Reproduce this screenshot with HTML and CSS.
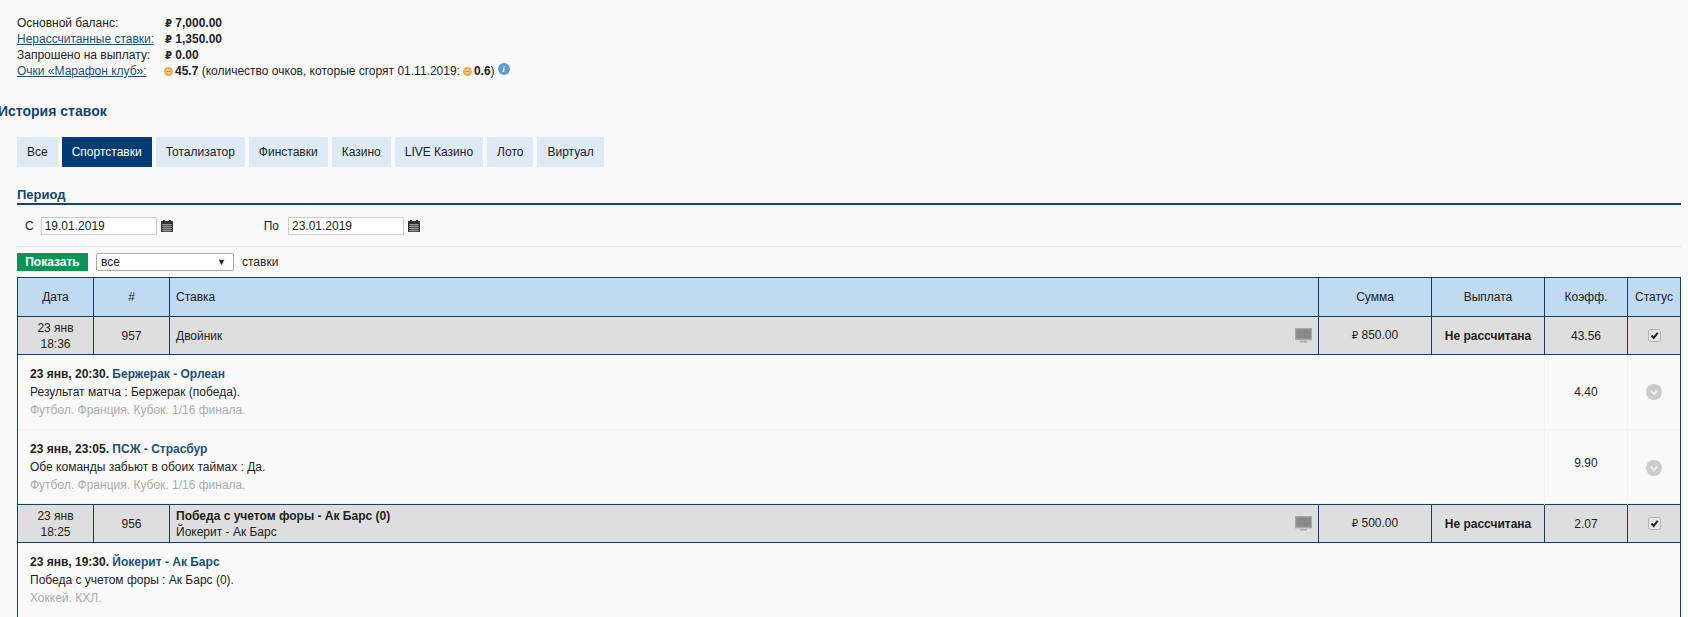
FILE: index.html
```html
<!DOCTYPE html>
<html lang="ru">
<head>
    <meta charset="UTF-8">
    <title>История ставок</title>
    <link rel="stylesheet" href="styles.css">
</head>
<body>
    <svg class="sprites" width="0" height="0">
        <symbol id="monitor" viewBox="0 0 17 15">
            <rect x="0" y="0" width="17" height="12" fill="#999"/>
            <rect x="1.5" y="1.5" width="14" height="9" fill="#8a8a8a"/>
            <rect x="0" y="0" width="17" height="12" fill="none" stroke="#b5b5b5"/>
            <rect x="5" y="13" width="7" height="1.5" fill="#aaa"/>
        </symbol>
        <symbol id="cal" viewBox="0 0 12 12">
            <rect x="0" y="1" width="12" height="11" fill="#333"/>
            <rect x="2" y="0" width="2" height="2" fill="#333"/>
            <rect x="8" y="0" width="2" height="2" fill="#333"/>
            <path d="M1 4.5h10M1 6.5h10M1 8.5h10M1 10.5h10M3 4v8M5 4v8M7 4v8M9 4v8" stroke="#bbb" stroke-width=".6"/>
        </symbol>
        <symbol id="tick" viewBox="0 0 13 13">
            <rect x=".5" y=".5" width="12" height="12" rx="2" fill="#e6e6e6" stroke="#b4b4b4"/>
            <path d="M3.5 6.5l2.2 2.4 4-5" fill="none" stroke="#222" stroke-width="2"/>
        </symbol>
        <symbol id="pending" viewBox="0 0 16 16">
            <circle cx="8" cy="8" r="8" fill="#ccc"/>
            <path d="M4.8 6.8L8 10l3.2-3.2" fill="none" stroke="#eee" stroke-width="2"/>
        </symbol>
        <symbol id="coin" viewBox="0 0 9 9">
            <circle cx="4.5" cy="4.5" r="4.5" fill="#eaa94f"/>
            <circle cx="4.5" cy="4.5" r="2.4" fill="#f6d9a6"/>
            <rect x="2.5" y="4" width="4" height="1" fill="#d08a2c"/>
        </symbol>
    </svg>

    <div class="balance">
        <div class="balance-row">
            <span class="balance-label">Основной баланс:</span>
            <b><span class="rub">₽</span> 7,000.00</b>
        </div>
        <div class="balance-row">
            <a class="balance-label" href="#">Нерассчитанные ставки:</a>
            <b><span class="rub">₽</span> 1,350.00</b>
        </div>
        <div class="balance-row">
            <span class="balance-label">Запрошено на выплату:</span>
            <b><span class="rub">₽</span> 0.00</b>
        </div>
        <div class="balance-row">
            <a class="balance-label" href="#">Очки «Марафон клуб»:</a>
            <span class="points">
                <svg class="coin"><use href="#coin"/></svg><b>45.7</b>&nbsp;(количество очков, которые сгорят 01.11.2019:<svg class="coin coin-gap"><use href="#coin"/></svg><b>0.6</b>)
                <span class="info">i</span>
            </span>
        </div>
    </div>

    <h1 class="page-title">История ставок</h1>

    <div class="tabs">
        <a class="tab" href="#">Все</a>
        <a class="tab active" href="#">Спортставки</a>
        <a class="tab" href="#">Тотализатор</a>
        <a class="tab" href="#">Финставки</a>
        <a class="tab" href="#">Казино</a>
        <a class="tab" href="#">LIVE Казино</a>
        <a class="tab" href="#">Лото</a>
        <a class="tab" href="#">Виртуал</a>
    </div>

    <h2 class="period-title">Период</h2>

    <div class="dates">
        <div class="date-group">
            <label for="dateFrom">С</label>
            <input class="date-input" id="dateFrom" type="text" value="19.01.2019">
            <svg class="cal"><use href="#cal"/></svg>
        </div>
        <div class="date-group date-group-to">
            <label for="dateTo">По</label>
            <input class="date-input" id="dateTo" type="text" value="23.01.2019">
            <svg class="cal"><use href="#cal"/></svg>
        </div>
    </div>

    <div class="filter">
        <button class="show-btn" type="button">Показать</button>
        <div class="select"><span>все</span><span class="select-arrow">▼</span></div>
        <span>ставки</span>
    </div>

    <table class="bets">
        <colgroup>
            <col class="col-date">
            <col class="col-num">
            <col>
            <col class="col-money">
            <col class="col-money">
            <col class="col-coef">
            <col class="col-status">
        </colgroup>
        <thead>
            <tr>
                <th>Дата</th>
                <th>#</th>
                <th class="left">Ставка</th>
                <th>Сумма</th>
                <th>Выплата</th>
                <th>Коэфф.</th>
                <th>Статус</th>
            </tr>
        </thead>
        <tbody>
            <tr class="bet">
                <td>23 янв<br>18:36</td>
                <td>957</td>
                <td class="left">
                    <div class="bet-name">
                        <span>Двойник</span>
                        <svg class="monitor"><use href="#monitor"/></svg>
                    </div>
                </td>
                <td><span class="rub-small">₽</span> 850.00</td>
                <td><b>Не рассчитана</b></td>
                <td>43.56</td>
                <td><svg class="tick"><use href="#tick"/></svg></td>
            </tr>
            <tr class="leg">
                <td colspan="5">
                    <div class="leg-head"><b>23 янв, 20:30.</b> <a href="#">Бержерак - Орлеан</a></div>
                    <div>Результат матча : Бержерак (победа).</div>
                    <div class="leg-league">Футбол. Франция. Кубок. 1/16 финала.</div>
                </td>
                <td class="leg-coef">4.40</td>
                <td class="leg-status"><svg class="pending"><use href="#pending"/></svg></td>
            </tr>
            <tr class="leg leg-shifted">
                <td colspan="5">
                    <div class="leg-head"><b>23 янв, 23:05.</b> <a href="#">ПСЖ - Страсбур</a></div>
                    <div>Обе команды забьют в обоих таймах : Да.</div>
                    <div class="leg-league">Футбол. Франция. Кубок. 1/16 финала.</div>
                </td>
                <td class="leg-coef">9.90</td>
                <td class="leg-status"><svg class="pending"><use href="#pending"/></svg></td>
            </tr>
            <tr class="bet">
                <td>23 янв<br>18:25</td>
                <td>956</td>
                <td class="left">
                    <div class="bet-name">
                        <span><b>Победа с учетом форы - Ак Барс (0)</b><br>Йокерит - Ак Барс</span>
                        <svg class="monitor"><use href="#monitor"/></svg>
                    </div>
                </td>
                <td><span class="rub-small">₽</span> 500.00</td>
                <td><b>Не рассчитана</b></td>
                <td>2.07</td>
                <td><svg class="tick"><use href="#tick"/></svg></td>
            </tr>
            <tr class="leg leg-last">
                <td colspan="5">
                    <div class="leg-head"><b>23 янв, 19:30.</b> <a href="#">Йокерит - Ак Барс</a></div>
                    <div>Победа с учетом форы : Ак Барс (0).</div>
                    <div class="leg-league">Хоккей. КХЛ.</div>
                </td>
                <td class="leg-coef"></td>
                <td class="leg-status"></td>
            </tr>
        </tbody>
    </table>
</body>
</html>
```

FILE: styles.css
```css
html {
    height: 617px;
    overflow: hidden;
}

body {
    margin: 0;
    padding: 15px 7px 0 17px;
    height: 602px;
    overflow: hidden;
    background: #fafafa;
    color: #222;
    font-family: "Liberation Sans", Arial, sans-serif;
    font-size: 12px;
}

.sprites {
    position: absolute;
}

a {
    color: #1c4f78;
}

/* balance block */
.balance-row {
    display: flex;
    height: 16px;
    line-height: 16px;
}

.balance-label {
    width: 148px;
    flex-shrink: 0;
}

.rub {
    font-family: "DejaVu Sans", sans-serif;
    font-size: 10px;
}

.rub-small {
    font-family: "DejaVu Sans", sans-serif;
    font-size: 10px;
}

.points {
    display: flex;
    align-items: center;
}

.coin {
    width: 9px;
    height: 9px;
    margin: 0 2px 0 -1px;
}

.coin-gap {
    margin-left: 3px;
}

.info {
    display: inline-block;
    width: 12px;
    height: 12px;
    margin: -5px 0 0 3px;
    border-radius: 50%;
    background: #5b9bd5;
    color: #fff;
    font: italic bold 9px/12px "Liberation Serif", serif;
    text-align: center;
}

.page-title {
    margin: 23px 0 0 -19px;
    height: 18px;
    color: #13466e;
    font-size: 14px;
    line-height: 18px;
}

/* tabs */
.tabs {
    display: flex;
    gap: 4px;
    margin-top: 17px;
}

.tab {
    height: 30px;
    padding: 0 10px;
    background: #deebf6;
    color: #222;
    line-height: 30px;
    text-decoration: none;
}

.tab.active {
    background: #003b73;
    color: #fff;
}

.period-title {
    margin: 20px 0 0;
    height: 16px;
    border-bottom: 2px solid #13466e;
    color: #13466e;
    font-size: 13px;
    line-height: 16px;
}

/* dates */
.dates {
    display: flex;
    height: 41px;
    align-items: center;
    border-bottom: 1px solid #e4e4e4;
}

.date-group {
    display: flex;
    align-items: center;
    padding-left: 8px;
}

.date-group-to {
    padding-left: 91px;
}

.date-group label {
    margin-right: 7px;
}

.date-group-to label {
    margin-right: 9px;
}

.date-input {
    box-sizing: border-box;
    width: 116px;
    height: 18px;
    padding: 0 3px;
    border: 1px solid #ccc;
    background: #fff;
    color: #222;
    font-family: inherit;
    font-size: 12px;
}

.cal {
    width: 12px;
    height: 12px;
    margin-left: 4px;
}

.filter {
    display: flex;
    align-items: center;
    gap: 8px;
    margin-top: 6px;
    height: 18px;
}

.show-btn {
    width: 71px;
    height: 18px;
    padding: 0;
    border: none;
    background: #0c9457;
    color: #fff;
    font-family: inherit;
    font-size: 12px;
    font-weight: bold;
}

.select {
    box-sizing: border-box;
    display: flex;
    justify-content: space-between;
    align-items: center;
    width: 138px;
    height: 18px;
    padding: 0 7px 0 4px;
    border: 1px solid #aaa;
    border-radius: 2px;
    background: #fff;
}

.select-arrow {
    font-size: 9px;
}

/* bets table */
.bets {
    width: 1664px;
    margin-top: 6px;
    border-collapse: collapse;
    table-layout: fixed;
}

.col-date,
.col-num {
    width: 76px;
}

.col-money {
    width: 113px;
}

.col-coef {
    width: 83px;
}

.col-status {
    width: 53px;
}

.bets th,
.bets .bet td {
    border: 1px solid #1a3d66;
    padding: 0;
    text-align: center;
}

.bets th {
    height: 38px;
    background: #c0daf2;
    font-weight: normal;
}

.bets .bet td {
    height: 37px;
    background: #dedede;
    line-height: 16px;
}

.bets .bet .left,
.bets th.left {
    padding-left: 6px;
    text-align: left;
}

.bet-name {
    display: flex;
    justify-content: space-between;
    align-items: center;
    padding-right: 6px;
}

.monitor {
    width: 17px;
    height: 15px;
}

.tick {
    display: block;
    width: 13px;
    height: 13px;
    margin: 0 auto;
}

.leg td {
    box-sizing: border-box;
    height: 75px;
    padding: 0;
    border-left: 1px solid #f3f3f3;
    border-right: 1px solid #f3f3f3;
    box-shadow: inset 0 -1px 0 #f3f3f3;
}

.leg-last td {
    border-left-color: transparent;
    border-right-color: transparent;
    box-shadow: none;
}

.leg td:first-child {
    padding-left: 12px;
    border-left: 1px solid #1a3d66;
    line-height: 18px;
}

.leg td:last-child {
    border-right: 1px solid #1a3d66;
}

.leg a {
    font-weight: bold;
    text-decoration: none;
}

.leg-league {
    color: #aaa;
}

.leg-coef,
.leg-status {
    text-align: center;
}

.leg-shifted .leg-coef {
    padding-bottom: 8px;
}

.leg-shifted .leg-status {
    padding-top: 2px;
}

.pending {
    display: block;
    width: 16px;
    height: 16px;
    margin: 0 auto;
}
```
